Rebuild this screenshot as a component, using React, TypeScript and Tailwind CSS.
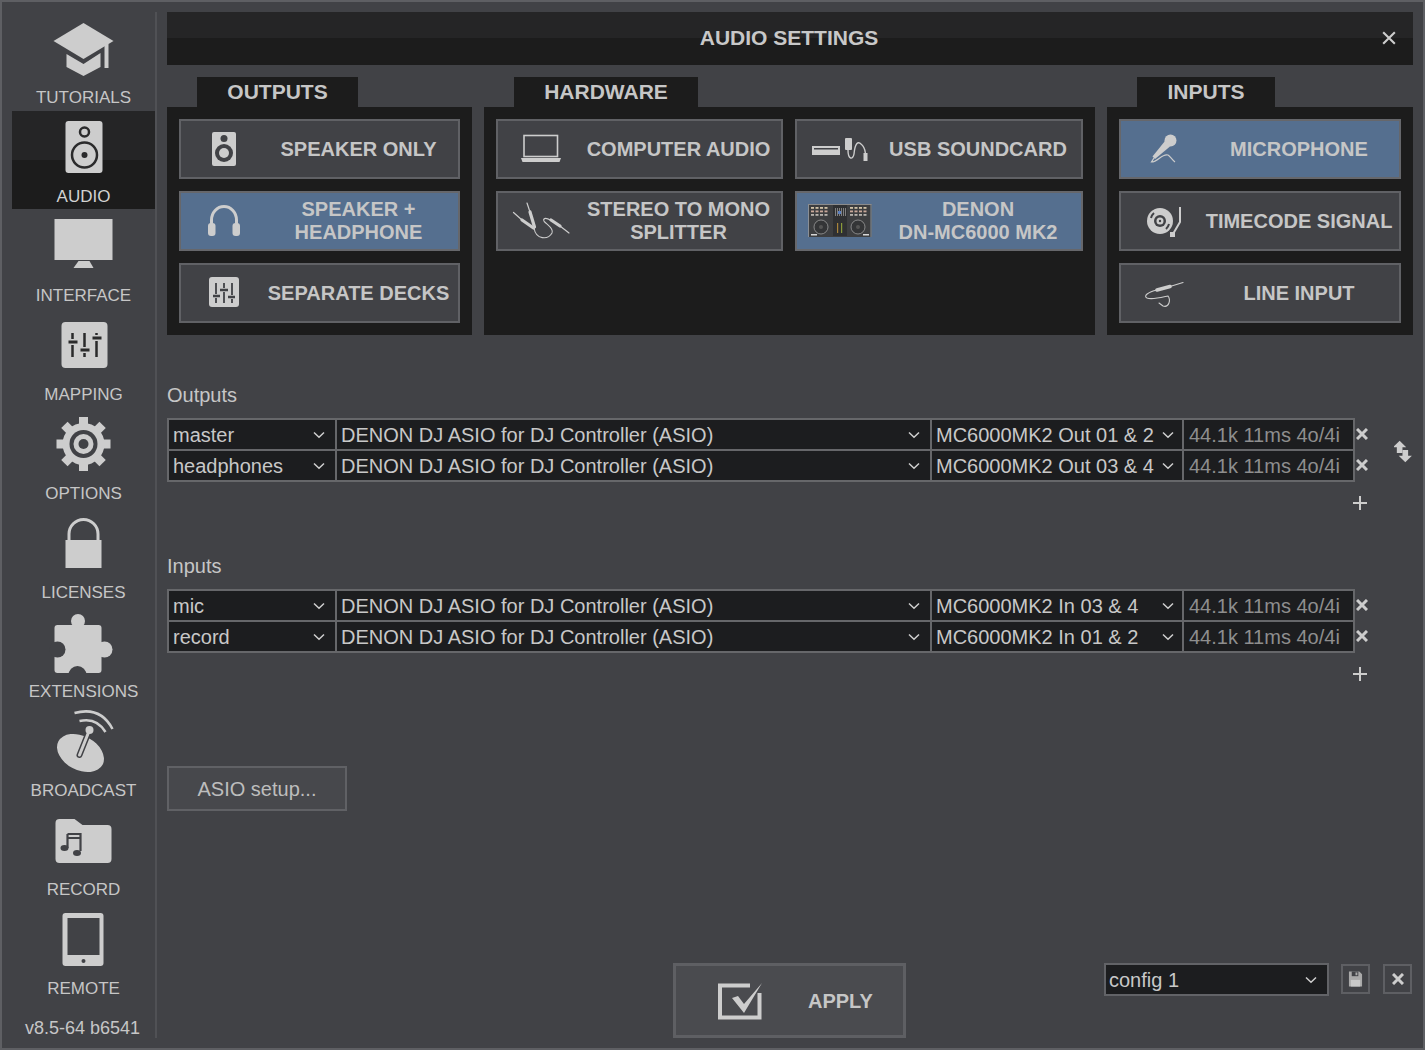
import type { ReactNode } from "react";

const LIGHT = "#cdcdcd";
const DARK = "#2a2a2b";
const BG = "#414246";

function Chevron() {
  return (
    <svg width="12" height="8" viewBox="0 0 12 8" fill="none" className="shrink-0">
      <path d="M1 1.5 L6 6.3 L11 1.5" stroke="#cfcfcf" strokeWidth="1.5" />
    </svg>
  );
}

function Cross({ size = 12, width = 3 }: { size?: number; width?: number }) {
  return (
    <svg width={size} height={size} viewBox="0 0 12 12" fill="none">
      <path d="M1 1 L11 11 M11 1 L1 11" stroke={LIGHT} strokeWidth={width} />
    </svg>
  );
}

function Plus() {
  return (
    <svg width="14" height="14" viewBox="0 0 14 14" fill="none">
      <path d="M7 0 V14 M0 7 H14" stroke={LIGHT} strokeWidth="2" />
    </svg>
  );
}

// Sidebar entry: the svg viewBox uses page coordinates, so paths read like the screenshot
function NavItem({ top, label, active, children }: { top: number; label: string; active?: boolean; children: ReactNode }) {
  return (
    <div
      className={
        active
          ? "h-[99px] flex flex-col items-center bg-[linear-gradient(#252526_49px,#1c1c1c_49px,#1c1c1c_98px,transparent_98px)] text-[#d2d2d2]"
          : "h-[99px] flex flex-col items-center text-[#c6c6c6]"
      }
    >
      <svg width="74" height="74" viewBox={`46.5 ${top} 74 74`} className="shrink-0">
        {children}
      </svg>
      <div className="h-[24px] leading-[24px] text-[17px] whitespace-nowrap">{label}</div>
    </div>
  );
}

function Sidebar() {
  const gearTeeth = [0, 45, 90, 135, 180, 225, 270, 315];
  return (
    <aside className="w-[153px] shrink-0 pl-[10px] pt-[10px] flex flex-col h-full">
      <NavItem top={12} label="TUTORIALS">
        <path d="M83 23 L113 41 L83 59 L53 41 Z" fill={LIGHT} />
        <path d="M66 54 L83 64 L100 53 V67 L83 76 L66 67 Z" fill={LIGHT} />
        <path d="M106 44 V68" stroke={LIGHT} strokeWidth="4" />
      </NavItem>
      <NavItem top={111} label="AUDIO" active>
        <rect x="65" y="121" width="37" height="52" rx="3" fill={LIGHT} />
        <circle cx="84" cy="132" r="4.5" fill="none" stroke={DARK} strokeWidth="2.5" />
        <circle cx="84" cy="155" r="12.5" fill="none" stroke={DARK} strokeWidth="2.5" />
        <circle cx="84" cy="155" r="3" fill={DARK} />
      </NavItem>
      <NavItem top={210} label="INTERFACE">
        <rect x="54" y="219" width="58" height="41" fill={LIGHT} />
        <path d="M78 261 H89 L93 268 H73 Z" fill={LIGHT} />
      </NavItem>
      <NavItem top={309} label="MAPPING">
        <rect x="61" y="322" width="46" height="46" rx="4" fill={LIGHT} />
        <path d="M72 333 V339 M72 345 V357 M84 333 V347 M84 353 V357 M96 333 V335 M96 341 V357" stroke={DARK} strokeWidth="2.5" />
        <path d="M68 342 H77 M80 350 H89 M92 338 H101" stroke={DARK} strokeWidth="3" />
      </NavItem>
      <NavItem top={408} label="OPTIONS">
        <circle cx="83" cy="444" r="21" fill={LIGHT} />
        {gearTeeth.map((a) => (
          <rect key={a} x="78.5" y="417" width="9" height="12" fill={LIGHT} transform={`rotate(${a} 83 444)`} />
        ))}
        <circle cx="83" cy="444" r="14" fill={BG} />
        <circle cx="83" cy="444" r="10" fill={LIGHT} />
        <circle cx="83" cy="444" r="5" fill={BG} />
      </NavItem>
      <NavItem top={507} label="LICENSES">
        <rect x="65" y="540" width="36" height="28" fill={LIGHT} />
        <path d="M68.5 541 V534 A14.5 14.5 0 0 1 97.5 534 V541" fill="none" stroke={LIGHT} strokeWidth="3" />
      </NavItem>
      <NavItem top={606} label="EXTENSIONS">
        <rect x="54" y="625" width="47" height="48" rx="3" fill={LIGHT} />
        <circle cx="77.5" cy="621" r="7" fill={LIGHT} />
        <circle cx="104" cy="649.5" r="8" fill={LIGHT} />
        <circle cx="57" cy="649.5" r="8" fill={BG} />
        <circle cx="77" cy="675" r="9" fill={BG} />
        <rect x="50" y="673" width="56" height="5" fill={BG} />
      </NavItem>
      <NavItem top={705} label="BROADCAST">
        <ellipse cx="80" cy="753" rx="25" ry="17" transform="rotate(28 80 753)" fill={LIGHT} />
        <path d="M79 755 L89 730" stroke={BG} strokeWidth="6" strokeLinecap="round" />
        <path d="M79 755 L89 730" stroke={LIGHT} strokeWidth="3" strokeLinecap="round" />
        <circle cx="89" cy="730" r="4" fill={LIGHT} />
        <path d="M74 713 Q100 706 112 729 M79 721 Q96 717 105 732" fill="none" stroke={LIGHT} strokeWidth="2.5" />
      </NavItem>
      <NavItem top={804} label="RECORD">
        <path d="M55 823 Q55 819 59 819 H74 L82 825 H107 Q111 825 111 829 V859 Q111 863 107 863 H59 Q55 863 55 859 Z" fill={LIGHT} />
        <path d="M67 834 H80 V851 M67 834 V848 M67 838 H80" fill="none" stroke={BG} strokeWidth="2.2" />
        <ellipse cx="64" cy="848" rx="4" ry="3" fill={BG} />
        <ellipse cx="76.5" cy="853" rx="4" ry="3" fill={BG} />
      </NavItem>
      <NavItem top={903} label="REMOTE">
        <rect x="62" y="913" width="41" height="53" rx="3" fill={LIGHT} />
        <rect x="67" y="918" width="32" height="37" fill={BG} />
        <circle cx="83" cy="961" r="2" fill={BG} />
      </NavItem>
      <div className="mt-[14px] pr-[2px] text-[18px] leading-[24px] text-center text-[#c6c6c6] whitespace-nowrap">v8.5-64 b6541</div>
    </aside>
  );
}

function SetupButton({
  left,
  top,
  lines,
  active,
  icon,
}: {
  left: number;
  top: number;
  lines: string[];
  active?: boolean;
  icon: ReactNode;
}) {
  return (
    <div
      className={
        active
          ? "h-[60px] flex items-center border-2 border-[#66676b] bg-[#556f8f] pr-[10px]"
          : "h-[60px] flex items-center border-2 border-[#606165] bg-[#414246] pr-[10px]"
      }
    >
      <svg width="88" height="56" viewBox={`${left + 2} ${top + 2} 88 56`} className="shrink-0">
        {icon}
      </svg>
      <div className="flex-1 min-w-0 flex justify-center text-center font-bold text-[20px] leading-[23px] whitespace-nowrap text-[#c6c6c6]">
        <div>
          {lines.map((l) => (
            <div key={l}>{l}</div>
          ))}
        </div>
      </div>
    </div>
  );
}

function Panel({ title, tabClass, width, children }: { title: string; tabClass: string; width: string; children: ReactNode }) {
  return (
    <section className={`${width} flex flex-col shrink-0`}>
      <div className={`${tabClass} ml-[30px] h-[30px] bg-[#1c1c1c] flex items-center justify-center font-bold text-[21px] text-[#c6c6c6]`}>
        {title}
      </div>
      <div className="h-[228px] bg-[#1c1c1c] p-[12px]">{children}</div>
    </section>
  );
}

function DenonImage() {
  const cols = [0, 1, 2, 3];
  const rows = [0, 1, 2];
  const tints = ["#d0c2a8", "#c9a89a", "#b8b4ae"];
  const faders = [0, 1, 2, 3, 4, 5];
  return (
    <g>
      <rect x="808" y="204" width="63.5" height="33" fill="#3d3e40" />
      <rect x="808" y="204" width="1" height="33" fill="#8a8f96" />
      <rect x="870.5" y="204" width="1" height="33" fill="#8a8f96" />
      <rect x="808" y="204" width="63.5" height="1" fill="#8b8b8b" />
      <rect x="833" y="205" width="14" height="31" fill="#2f3032" />
      {rows.map((r) =>
        cols.map((c) => (
          <g key={`${r}-${c}`}>
            <rect x={811 + c * 4.5} y={207 + r * 3.5} width="3" height="1.8" fill={tints[r]} />
            <rect x={850 + c * 4.5} y={207 + r * 3.5} width="3" height="1.8" fill={tints[r]} />
          </g>
        )),
      )}
      {faders.map((i) => (
        <rect key={i} x={835 + i * 2} y="208" width="1" height="8" fill="#808080" />
      ))}
      <rect x="838" y="211" width="3" height="3" fill="#5a7fc0" />
      <circle cx="821" cy="227" r="7" fill="#343537" stroke="#9a9a9a" strokeWidth="0.8" />
      <circle cx="858" cy="227" r="7" fill="#343537" stroke="#9a9a9a" strokeWidth="0.8" />
      <circle cx="821" cy="227" r="2" fill="#555" />
      <circle cx="858" cy="227" r="2" fill="#555" />
      <rect x="837" y="223" width="1.2" height="10" fill="#a8843a" />
      <rect x="841" y="223" width="1.2" height="10" fill="#8a9a3a" />
      <rect x="811" y="234" width="6" height="1.5" fill="#d6d6d6" />
      <rect x="863" y="234" width="6" height="1.5" fill="#d6d6d6" />
    </g>
  );
}

function OutputsPanel() {
  return (
    <Panel title="OUTPUTS" tabClass="w-[161px]" width="w-[305px]">
      <div className="flex flex-col gap-[12px]">
        <SetupButton
          left={179}
          top={119}
          lines={["SPEAKER ONLY"]}
          icon={
            <g>
              <rect x="212" y="132" width="24" height="34" rx="2" fill={LIGHT} />
              <circle cx="224" cy="138.5" r="3.5" fill={BG} />
              <circle cx="224" cy="153" r="9" fill={BG} />
              <circle cx="224" cy="153" r="5" fill={LIGHT} />
            </g>
          }
        />
        <SetupButton
          left={179}
          top={191}
          active
          lines={["SPEAKER +", "HEADPHONE"]}
          icon={
            <g>
              <path d="M211.5 226 V220 A12.5 13.5 0 0 1 236.5 220 V226" fill="none" stroke={LIGHT} strokeWidth="3" />
              <rect x="208" y="223" width="7.5" height="13" rx="3" fill={LIGHT} />
              <rect x="232.5" y="223" width="7.5" height="13" rx="3" fill={LIGHT} />
            </g>
          }
        />
        <SetupButton
          left={179}
          top={263}
          lines={["SEPARATE DECKS"]}
          icon={
            <g>
              <rect x="209" y="277" width="30" height="30" rx="3" fill={LIGHT} />
              <path d="M216 283 V294 M216 298 V303 M224 283 V288 M224 292 V303 M232 283 V295 M232 299 V303" stroke={BG} strokeWidth="1.8" />
              <path d="M213 296 H220 M220 290 H228 M228 297 H235" stroke={BG} strokeWidth="2.5" />
            </g>
          }
        />
      </div>
    </Panel>
  );
}

function HardwarePanel() {
  return (
    <Panel title="HARDWARE" tabClass="w-[184px]" width="w-[611px]">
      <div className="grid grid-cols-[287px_288px] gap-[12px]">
        <SetupButton
          left={496}
          top={119}
          lines={["COMPUTER AUDIO"]}
          icon={
            <g>
              <rect x="524" y="135.5" width="33.5" height="21" fill="none" stroke={LIGHT} strokeWidth="1.6" />
              <path d="M521 158 H561 L559.5 162 H522.5 Z" fill={LIGHT} />
            </g>
          }
        />
        <SetupButton
          left={795}
          top={119}
          lines={["USB SOUNDCARD"]}
          icon={
            <g>
              <rect x="812" y="146" width="28" height="9" fill={LIGHT} />
              <rect x="814" y="148" width="24" height="1.5" fill={BG} />
              <rect x="845" y="138" width="7" height="12" rx="1" fill={LIGHT} />
              <path d="M848 150 C848 160 853 160 854 154 C855 143 858 141 861 144 C865 147 865 150 865.5 154" fill="none" stroke={LIGHT} strokeWidth="1.4" />
              <rect x="863.5" y="153" width="4" height="8" fill={LIGHT} />
            </g>
          }
        />
        <SetupButton
          left={496}
          top={191}
          lines={["STEREO TO MONO", "SPLITTER"]}
          icon={
            <g fill="none" stroke={LIGHT} strokeLinecap="round">
              <path d="M527 203 L530 212" strokeWidth="1.2" />
              <path d="M530 212 L534.5 227" strokeWidth="3.2" />
              <path d="M513.5 212.5 L522 220" strokeWidth="1.2" />
              <path d="M522 220 L533.5 228" strokeWidth="3.2" />
              <path d="M534 228 C536 240 548 240 552 233 C555 227 541 222 544 219 C546 217 550 220 552 221" strokeWidth="1.1" />
              <path d="M551 220 L560 226" strokeWidth="3.2" />
              <path d="M560 226 L569 233" strokeWidth="1.2" />
            </g>
          }
        />
        <SetupButton left={795} top={191} active lines={["DENON", "DN-MC6000 MK2"]} icon={<DenonImage />} />
      </div>
    </Panel>
  );
}

function InputsPanel() {
  return (
    <Panel title="INPUTS" tabClass="w-[138px]" width="w-[306px]">
      <div className="flex flex-col gap-[12px]">
        <SetupButton
          left={1119}
          top={119}
          active
          lines={["MICROPHONE"]}
          icon={
            <g>
              <circle cx="1170.5" cy="140.5" r="6" fill={LIGHT} />
              <path d="M1165 141 L1170 146.5 L1155 159 L1152.5 156.5 Z" fill={LIGHT} />
              <path d="M1154 158 L1151.5 162 C1158 162 1162 153 1168 155 C1170 156 1172 160 1175 162" fill="none" stroke={LIGHT} strokeWidth="1.2" />
            </g>
          }
        />
        <SetupButton
          left={1119}
          top={191}
          lines={["TIMECODE SIGNAL"]}
          icon={
            <g>
              <circle cx="1160" cy="221" r="13" fill={LIGHT} />
              <circle cx="1160" cy="221" r="6" fill={BG} />
              <circle cx="1160" cy="221" r="3.5" fill={LIGHT} />
              <circle cx="1160" cy="221" r="1.2" fill={BG} />
              <path d="M1151 218 A10 10 0 0 1 1154 213 M1169 224 A10 10 0 0 1 1166 229" fill="none" stroke={BG} strokeWidth="2" />
              <path d="M1180 207 V222 L1173 234" fill="none" stroke={LIGHT} strokeWidth="2" />
              <rect x="1170" y="232" width="5" height="5" fill={LIGHT} />
            </g>
          }
        />
        <SetupButton
          left={1119}
          top={263}
          lines={["LINE INPUT"]}
          icon={
            <g fill="none" stroke={LIGHT} strokeLinecap="round">
              <path d="M1157 290 L1170 286.5" strokeWidth="3.6" />
              <path d="M1170 286.5 L1183 282.5" strokeWidth="1.2" />
              <path d="M1157 290 C1148 292 1143 296 1147 298 C1152 300 1163 297 1168 296 C1171 300 1169 308 1163 306 L1159 303" strokeWidth="1.1" />
            </g>
          }
        />
      </div>
    </Panel>
  );
}

type Row = { name: string; device: string; channel: string };

function SelectCell({ text, tight }: { text: string; tight?: boolean }) {
  return (
    <div
      className={
        tight
          ? "bg-[#1c1d1f] flex items-center justify-between pl-[4px] pr-[8px] text-[20px] text-[#c8c8c8] whitespace-nowrap overflow-hidden"
          : "bg-[#1c1d1f] flex items-center justify-between pl-[4px] pr-[10px] text-[20px] text-[#c8c8c8] whitespace-nowrap overflow-hidden"
      }
    >
      <span>{text}</span>
      <Chevron />
    </div>
  );
}

function DeviceTable({ label, rows }: { label: string; rows: Row[] }) {
  return (
    <div>
      <div className="h-[24px] leading-[24px] text-[20px] text-[#c6c6c6]">{label}</div>
      <div className="flex mt-[11px]">
        <div className="w-[1188px] grid grid-cols-[166px_593px_250px_169px] auto-rows-[29px] gap-[2px] p-[2px] bg-[#66676a]">
          {rows.map((r) => (
            <div key={r.name} className="contents">
              <SelectCell text={r.name} />
              <SelectCell text={r.device} />
              <SelectCell text={r.channel} tight />
              <div className="bg-[#1c1d1f] flex items-center pl-[5px] text-[20px] text-[#8e8e8e] whitespace-nowrap">44.1k 11ms 4o/4i</div>
            </div>
          ))}
        </div>
        <div className="w-[14px] grid auto-rows-[31px] justify-items-center items-center">
          {rows.map((r) => (
            <Cross key={r.name} />
          ))}
        </div>
        {label === "Outputs" && (
          <svg width="20" height="24" viewBox="0 0 20 24" className="ml-[26px] mt-[22px]" fill={LIGHT}>
            <path d="M6 0 L13 7 H9 V13 H3 V7 H-1 Z" />
            <path d="M12 23 L5 16 H9 V10 H15 V16 H19 Z" />
          </svg>
        )}
      </div>
      <div className="w-[1200px] flex justify-end mt-[14px] h-[14px]">
        <Plus />
      </div>
    </div>
  );
}

const outputs: Row[] = [
  { name: "master", device: "DENON DJ ASIO for DJ Controller (ASIO)", channel: "MC6000MK2 Out 01 & 2" },
  { name: "headphones", device: "DENON DJ ASIO for DJ Controller (ASIO)", channel: "MC6000MK2 Out 03 & 4" },
];

const inputs: Row[] = [
  { name: "mic", device: "DENON DJ ASIO for DJ Controller (ASIO)", channel: "MC6000MK2 In 03 & 4" },
  { name: "record", device: "DENON DJ ASIO for DJ Controller (ASIO)", channel: "MC6000MK2 In 01 & 2" },
];

export default function App() {
  return (
    <div className="w-[1425px] h-[1050px] overflow-hidden border-2 border-[#5e5f63] bg-[#414246] flex font-['Liberation_Sans',sans-serif]">
      <Sidebar />
      <div className="w-[2px] shrink-0 bg-[#505155] mt-[10px] mb-[10px]" />
      <main className="flex-1 min-w-0 pl-[10px] pr-[10px] pt-[10px] pb-[10px] flex flex-col">
        {/* Title */}
        <header className="relative h-[53px] shrink-0 flex items-center justify-center bg-[linear-gradient(#252526_50%,#1c1c1c_50%)]">
          <div className="font-bold text-[21px] text-[#c8c8c8] mb-[2px] mr-[2px]">AUDIO SETTINGS</div>
          <div className="absolute right-[17px] top-[19px]">
            <Cross size={14} width={1.8} />
          </div>
        </header>

        {/* Preset panels */}
        <div className="mt-[12px] flex gap-[12px]">
          <OutputsPanel />
          <HardwarePanel />
          <InputsPanel />
        </div>

        <div className="mt-[48px]">
          <DeviceTable label="Outputs" rows={outputs} />
        </div>
        <div className="mt-[44px]">
          <DeviceTable label="Inputs" rows={inputs} />
        </div>

        <div className="mt-[85px] w-[180px] h-[45px] border-2 border-[#606165] bg-[#47484c] flex items-center justify-center text-[20px] text-[#bdbdbd]">
          ASIO setup...
        </div>

        {/* Footer */}
        <div className="mt-auto flex items-start">
          <div className="ml-[506px] w-[233px] h-[75px] border-[3px] border-[#5e5f63] bg-[#4a4b4f] flex items-center">
            <svg width="48" height="42" viewBox="0 0 48 42" className="ml-[41px] shrink-0">
              <path d="M1 5.5 H33 M3 3.5 V39.5 M1 37.5 H44.5 M42.5 39.5 V13" fill="none" stroke={LIGHT} strokeWidth="4" />
              <path d="M15 18 L21 16 L27 24 L45 3 L27 33 Z" fill={LIGHT} />
            </svg>
            <div className="ml-[43px] font-bold text-[20px] text-[#c6c6c6]">APPLY</div>
          </div>
          <div className="ml-[198px] w-[225px] h-[33px] border-[2px] border-[#626367] bg-[#1c1d1f] flex items-center justify-between pl-[3px] pr-[10px] text-[20px] text-[#c8c8c8]">
            <span>config 1</span>
            <Chevron />
          </div>
          <div className="ml-[12px] mt-[1px] w-[29px] h-[30px] border-2 border-[#5e5f63] flex items-center justify-center">
            <svg width="15" height="16" viewBox="0 0 16 16">
              <path d="M1 0 H12 L15 3 V16 H1 Z" fill="#a9a9a9" />
              <rect x="4" y="0" width="7" height="5" fill={BG} />
              <rect x="8" y="1" width="2" height="3" fill="#a9a9a9" />
              <rect x="3" y="9" width="10" height="7" fill="#c9c9c9" />
            </svg>
          </div>
          <div className="ml-[13px] mt-[1px] w-[29px] h-[30px] border-2 border-[#5e5f63] flex items-center justify-center">
            <Cross size={12} width={3} />
          </div>
        </div>
      </main>
    </div>
  );
}
